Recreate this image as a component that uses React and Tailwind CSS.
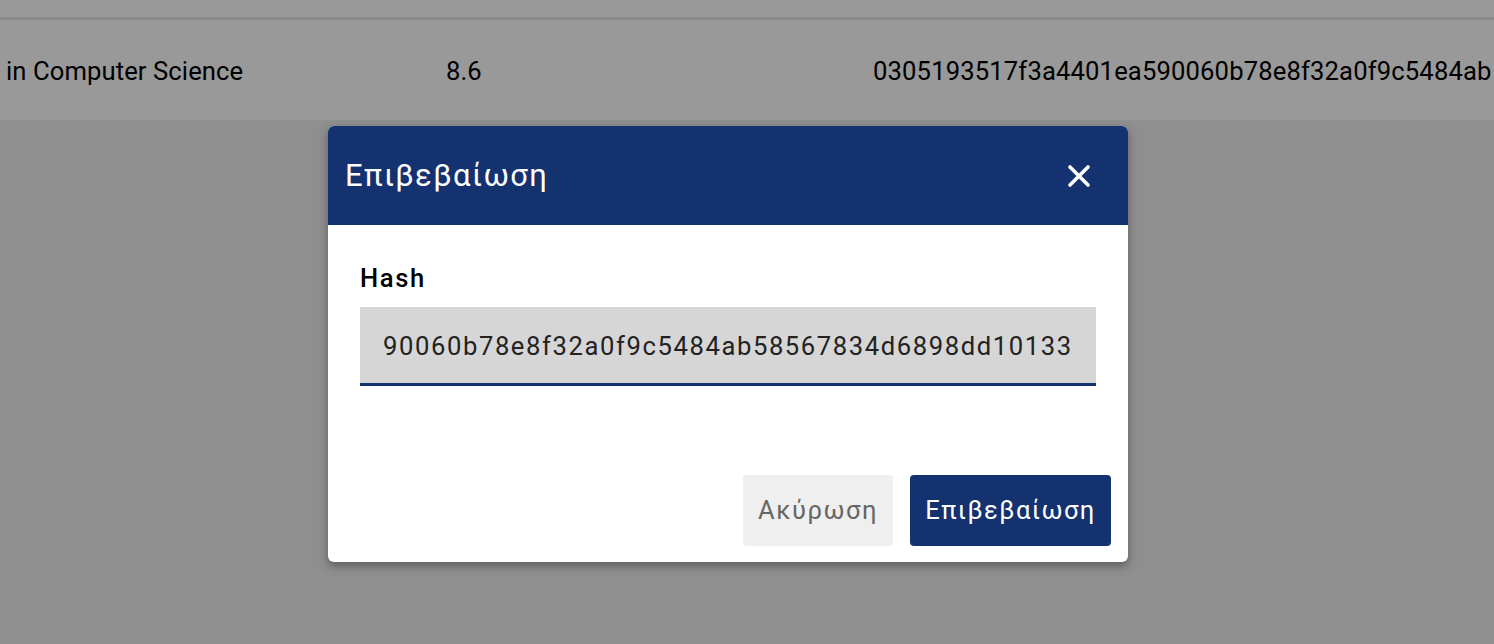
import { X } from "lucide-react";

const font = { fontFamily: "Roboto, 'Noto Sans', sans-serif" };

function TableRow() {
  return (
    <div className="flex h-[100px] items-center bg-white pt-[2px] text-[25.6px] text-black">
      <div className="w-[440px] pl-[6px] tracking-[0.1px]">in Computer Science</div>
      <div className="w-[427px] pl-[6px]">8.6</div>
      <div className="flex-1 whitespace-nowrap pl-[6px] tracking-[0.15px]">
        0305193517f3a4401ea590060b78e8f32a0f9c5484ab
      </div>
    </div>
  );
}

function ConfirmDialog() {
  return (
    <div className="w-[800px] overflow-hidden rounded-[6px] bg-white shadow-[0_4px_10px_rgba(0,0,0,0.35)]">
      <div className="flex h-[99px] items-center justify-between bg-[#143270] pl-[17px] pr-[31px] text-white">
        <h2 className="pt-[2px] text-[31px] font-normal tracking-[1.4px]">Επιβεβαίωση</h2>
        <X className="h-[36px] w-[36px]" strokeWidth={2.4} />
      </div>
      <div className="px-[32px] pt-[36px]">
        <label className="block text-[25.6px] font-medium leading-[34px] tracking-[1.6px] text-black">
          Hash
        </label>
        <div className="mt-[12px] flex h-[79px] items-center whitespace-nowrap border-b-[3px] border-[#143270] bg-[#d6d6d6] px-[23px] pt-[3px] text-[25.6px] tracking-[1.6px] text-[#222]">
          90060b78e8f32a0f9c5484ab58567834d6898dd10133
        </div>
      </div>
      <div className="flex justify-end gap-[17px] pb-[16px] pr-[17px] pt-[89px]">
        <button className="h-[71px] w-[150px] rounded-[4px] bg-[#efefef] text-[25.6px] tracking-[1.5px] text-[#666]">
          Ακύρωση
        </button>
        <button className="h-[71px] w-[201px] rounded-[4px] bg-[#143270] text-[25.6px] tracking-[1.4px] text-white">
          Επιβεβαίωση
        </button>
      </div>
    </div>
  );
}

export default function App() {
  return (
    <div style={font} className="relative h-screen w-full overflow-hidden bg-[#eeeeee]">
      <div className="h-[20px] border-b-[3px] border-[#e6e6e6] bg-white" />
      <TableRow />
      <div className="absolute inset-0 bg-black/40 pl-[328px] pt-[126px]">
        <ConfirmDialog />
      </div>
    </div>
  );
}
